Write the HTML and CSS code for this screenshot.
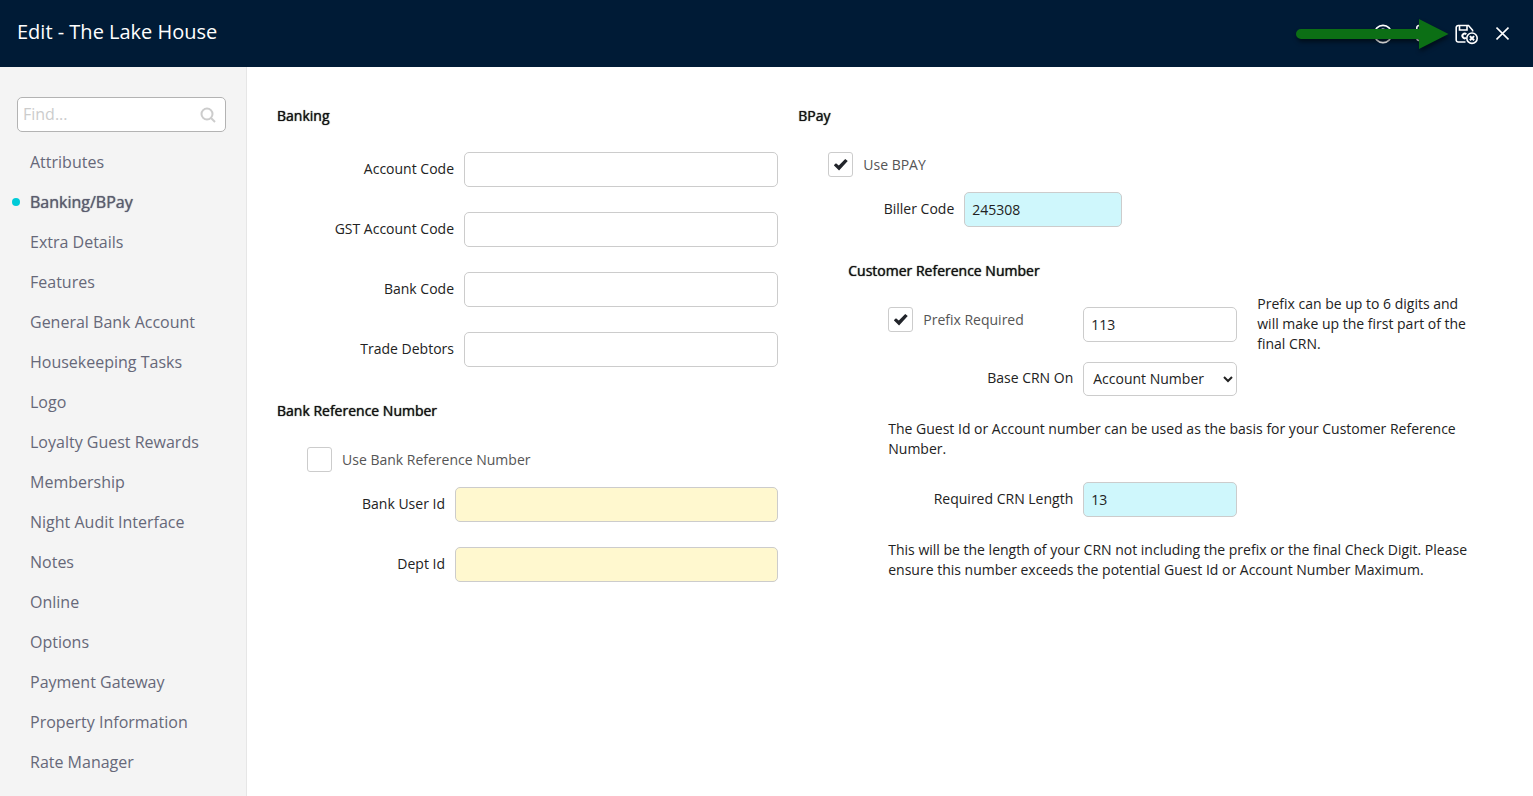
FILE: index.html
```
<!DOCTYPE html>
<html lang="en">

<head>
    <meta charset="utf-8">
    <title>Edit - The Lake House</title>
    <meta name="viewport" content="width=device-width, initial-scale=1">
    <link rel="stylesheet" href="styles.css">
</head>

<body>
    <header class="topbar">
        <h1>Edit - The Lake House</h1>
        <div class="actions">
            <button type="button" aria-label="Help">
                <svg width="24" height="24" viewBox="0 0 24 24">
                    <circle cx="13" cy="12" r="8.6" />
                    <path d="M10.2 10a2.8 2.6 0 1 1 4.2 2.2c-.9.6-1.4 1-1.4 2M13 16v1" />
                </svg>
            </button>
            <button type="button" aria-label="Save">
                <svg width="24" height="24" viewBox="0 0 24 24">
                    <path d="M7 3.500h7l4 4V16a2.500 2.500 0 0 1-2.500 2.500H7A2.500 2.500 0 0 1 4.800 16V6A2.500 2.500 0 0 1 7 3.500z" />
                </svg>
            </button>
            <button type="button" aria-label="Save and close">
                <svg width="24" height="24" viewBox="0 0 24 24">
                    <path d="M11.500 20H4.200A2 2 0 0 1 2.200 18V5.500a2 2 0 0 1 2-2H14.500L18.600 8.300V9.500" />
                    <path d="M5.500 3.500V8H13V3.500" />
                    <path d="M12.300 12.300a2.300 2.300 0 1 0-.2 3.500" stroke-width="2" />
                    <circle cx="18" cy="16.200" r="5.200" />
                    <path d="M15.900 14.100l4.200 4.200M20.100 14.100l-4.200 4.200" stroke-width="2" />
                </svg>
            </button>
            <button type="button" aria-label="Close">
                <svg width="13" height="24" viewBox="0 0 13 24">
                    <path d="M.5 5.500l12 12M12.500 5.500l-12 12" />
                </svg>
            </button>
        </div>
        <svg class="pointer" width="154" height="32" viewBox="0 0 154 32">
            <path d="M6 11H124V1L153.500 16L124 31V21H6A5 5 0 0 1 6 11z" />
        </svg>
    </header>

    <div class="layout">
        <nav class="sidebar">
            <div class="search">
                <input type="text" placeholder="Find..." aria-label="Find">
                <svg width="16" height="16" viewBox="0 0 16 16">
                    <circle cx="7" cy="7" r="5.500" />
                    <path d="M11 11l4 4" />
                </svg>
            </div>
            <ul class="menu">
                <li><a href="#">Attributes</a></li>
                <li><a href="#" class="active">Banking/BPay</a></li>
                <li><a href="#">Extra Details</a></li>
                <li><a href="#">Features</a></li>
                <li><a href="#">General Bank Account</a></li>
                <li><a href="#">Housekeeping Tasks</a></li>
                <li><a href="#">Logo</a></li>
                <li><a href="#">Loyalty Guest Rewards</a></li>
                <li><a href="#">Membership</a></li>
                <li><a href="#">Night Audit Interface</a></li>
                <li><a href="#">Notes</a></li>
                <li><a href="#">Online</a></li>
                <li><a href="#">Options</a></li>
                <li><a href="#">Payment Gateway</a></li>
                <li><a href="#">Property Information</a></li>
                <li><a href="#">Rate Manager</a></li>
            </ul>
        </nav>

        <main class="content">
            <div class="column">
                <section class="banking">
                    <h2>Banking</h2>
                    <div class="row">
                        <label for="account-code">Account Code</label>
                        <input type="text" id="account-code">
                    </div>
                    <div class="row">
                        <label for="gst-code">GST Account Code</label>
                        <input type="text" id="gst-code">
                    </div>
                    <div class="row">
                        <label for="bank-code">Bank Code</label>
                        <input type="text" id="bank-code">
                    </div>
                    <div class="row">
                        <label for="trade-debtors">Trade Debtors</label>
                        <input type="text" id="trade-debtors">
                    </div>
                </section>

                <section class="bank-ref">
                    <h2>Bank Reference Number</h2>
                    <div class="indent">
                        <label class="check"><input type="checkbox">Use Bank Reference Number</label>
                        <div class="row">
                            <label for="bank-user">Bank User Id</label>
                            <input type="text" id="bank-user" class="mandatory">
                        </div>
                        <div class="row">
                            <label for="dept-id">Dept Id</label>
                            <input type="text" id="dept-id" class="mandatory">
                        </div>
                    </div>
                </section>
            </div>

            <div class="column">
                <section class="bpay">
                    <h2>BPay</h2>
                    <div class="indent">
                        <label class="check"><input type="checkbox" checked>Use BPAY</label>
                        <div class="row">
                            <label for="biller-code">Biller Code</label>
                            <input type="text" id="biller-code" class="filled" value="245308">
                        </div>
                    </div>
                </section>

                <section class="crn">
                    <h2>Customer Reference Number</h2>
                    <div class="crn-body">
                        <div class="row prefix">
                            <label class="check"><input type="checkbox" checked>Prefix Required</label>
                            <input type="text" aria-label="Prefix" value="113">
                            <p>Prefix can be up to 6 digits and will make up the first part of the final CRN.</p>
                        </div>
                        <div class="row">
                            <label for="base-crn">Base CRN On</label>
                            <select id="base-crn">
                                <option>Account Number</option>
                                <option>Guest Id</option>
                            </select>
                        </div>
                        <p class="note">The Guest Id or Account number can be used as the basis for your Customer Reference Number.</p>
                        <div class="row">
                            <label for="crn-length">Required CRN Length</label>
                            <input type="text" id="crn-length" class="filled" value="13">
                        </div>
                        <p class="note">This will be the length of your CRN not including the prefix or the final Check Digit. Please ensure this number exceeds the potential Guest Id or Account Number Maximum.</p>
                    </div>
                </section>
            </div>
        </main>
    </div>
</body>

</html>
```

FILE: styles.css
```
* {
    box-sizing: border-box;
}

body {
    margin: 0;
    min-height: 100vh;
    display: flex;
    flex-direction: column;
    font-family: "Open Sans", "Noto Sans", sans-serif;
    font-size: 14px;
    line-height: 20px;
    color: #222;
    background: #fff;
}

/* Top bar */
.topbar {
    position: relative;
    display: flex;
    align-items: center;
    justify-content: space-between;
    height: 67px;
    padding: 0 24px 0 17px;
    background: #001b36;
    color: #fff;
}

.topbar h1 {
    margin: 0;
    padding-bottom: 3px;
    font-size: 20px;
    line-height: 28px;
    font-weight: 400;
}

.actions {
    display: flex;
    gap: 18px;
}

.actions button {
    padding: 0;
    border: 0;
    background: none;
    color: #fff;
    cursor: pointer;
}

.actions svg {
    display: block;
    fill: none;
    stroke: currentColor;
    stroke-width: 1.6;
}

.pointer {
    position: absolute;
    top: 18px;
    right: 84px;
    fill: #0c6f15;
    filter: drop-shadow(1px 3px 2px rgba(0, 0, 0, 0.5));
    overflow: visible;
}

.layout {
    flex: 1;
    display: flex;
}

/* Sidebar */
.sidebar {
    flex: none;
    width: 247px;
    padding-top: 30px;
    background: #f4f4f4;
    border-right: 1px solid #e6e6e6;
}

.search {
    display: flex;
    align-items: center;
    height: 35px;
    margin: 0 20px 10px 17px;
    padding: 0 9px 0 5px;
    background: #fff;
    border: 1px solid #b3b3b3;
    border-radius: 5px;
}

.search input {
    flex: 1;
    min-width: 0;
    padding: 0 0 2px;
    border: 0;
    outline: 0;
    font: inherit;
    font-size: 16px;
}

.search input::placeholder {
    color: #ccc;
}

.search svg {
    fill: none;
    stroke: #ccc;
    stroke-width: 2;
}

.menu {
    list-style: none;
    margin: 0;
    padding: 0;
}

.menu a {
    display: flex;
    align-items: center;
    height: 40px;
    padding-left: 30px;
    font-size: 16px;
    color: #666879;
    text-decoration: none;
}

.menu .active {
    padding-left: 12px;
    color: #5a5c6e;
    text-shadow: 0 0 1px #5a5c6e;
}

.menu .active::before {
    content: "";
    width: 8px;
    height: 8px;
    margin-right: 10px;
    border-radius: 50%;
    background: #00cbd8;
}

/* Form */
.content {
    flex: 1;
    display: grid;
    grid-template-columns: 5fr 7fr;
    gap: 20px;
    padding: 39px 33px 20px 30px;
}

.content h2 {
    margin: 0 0 26px;
    font-size: 14px;
    line-height: 20px;
    font-weight: 400;
    color: #111;
    text-shadow: 0 0 1px #111;
}

.content section {
    margin-bottom: 34px;
}

.content p {
    margin: 0;
}

.indent {
    padding-left: 30px;
}

.row {
    display: flex;
    align-items: center;
    gap: 10px;
}

.row + .row {
    margin-top: 25px;
}

.row > label:not(.check) {
    padding-bottom: 2px;
    text-align: right;
}

.banking .row > label {
    flex: 0 0 177px;
}

.bank-ref .row > label {
    flex: 0 0 138px;
}

.bpay .row > label {
    flex: 0 0 126px;
}

.row input[type="text"],
.row select {
    flex: 1;
    min-width: 0;
    height: 35px;
    padding: 0 7px;
    border: 1px solid #ccc;
    border-radius: 5px;
    background: #fff;
    font: inherit;
    color: #222;
}

.row select {
    height: 34px;
    padding: 0 0 2px 5px;
}

.row input.mandatory {
    background: #fff8cf;
}

.row input.filled {
    background: #cff7fc;
}

.bpay .row input.filled {
    flex: 0 0 158px;
}

.check {
    display: flex;
    align-items: center;
    gap: 10px;
    color: #555;
}

.indent .check {
    margin-bottom: 15px;
}

.check input {
    appearance: none;
    width: 25px;
    height: 25px;
    margin: 0;
    border: 1px solid #ccc;
    border-radius: 3px;
    background: #fff;
    display: grid;
    place-items: center;
}

.check input:checked::before {
    content: "";
    width: 14px;
    height: 12px;
    background: #22252b;
    clip-path: polygon(0 57%, 16% 40%, 36% 58%, 82% 4%, 100% 20%, 38% 100%);
}

/* Customer reference number */
.crn {
    padding-left: 50px;
}

.crn h2 {
    margin-bottom: 13px;
}

.crn-body {
    padding-left: 40px;
}

.crn .row > label {
    flex: 0 0 185px;
}

.crn .row input[type="text"],
.crn .row select {
    flex: 0 0 154px;
}

.prefix .check {
    align-self: flex-start;
    margin-top: 13px;
}

.prefix p {
    padding: 0 20px 0 10px;
}

.crn .row + .row {
    margin-top: 8px;
}

.crn .note {
    margin: 23px 0;
}
```
